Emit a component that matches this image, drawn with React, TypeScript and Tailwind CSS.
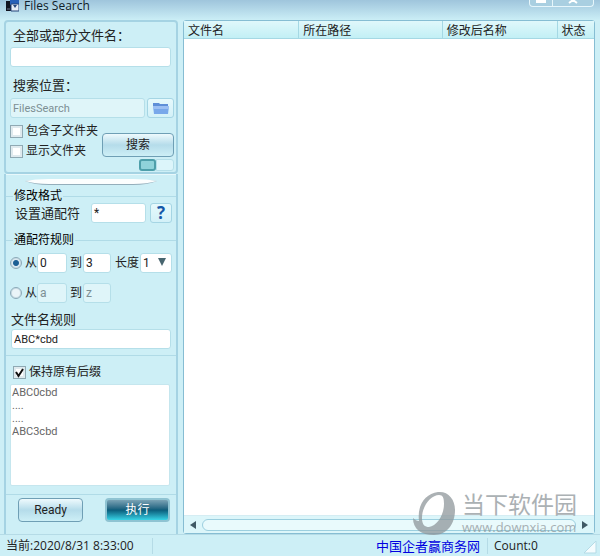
import React from "react";

const fieldBase =
  "h-5 min-w-0 rounded-[3px] border border-[#b5dfe9] bg-white px-[2px] font-['Roboto',sans-serif] leading-4 text-[#222] outline-none disabled:bg-[#dff5f9] disabled:text-[#7d8f94] disabled:opacity-100";
const field = fieldBase + " text-[12px]";
const smallField = fieldBase + " text-[11px]";
const iconButton =
  "flex h-5 items-center justify-center rounded-[3px] border border-[#a5d5e4] bg-gradient-to-b from-[#e6f9fc] to-[#d3f1f8]";
const pushButton =
  "h-6 rounded-[4px] border border-[#6f9fb5] bg-gradient-to-b from-[#eefafd] via-[#b5dcea] to-[#cdeff6] text-[12px] text-[#222]";
const wide = "text-[13px] leading-5 text-[#222]";
const tick =
  "size-[13px] shrink-0 appearance-none border border-[#8fa9b3] bg-white shadow-[inset_0_0_0_2px_#dfeaee]";
const dot =
  "size-3 shrink-0 appearance-none rounded-full border border-[#8aa9b8] bg-[#eaf4f8] shadow-[inset_0_0_0_1px_#c8dbe3] checked:bg-[radial-gradient(circle,#1c5f94_35%,#dceaf2_50%)]";

function TitleBar() {
  return (
    <header className="flex h-5 items-start justify-between bg-gradient-to-b from-[#9fc5dc] to-[#cbeef6] pl-[6px] pr-[6px]">
      <div className="flex items-start gap-[5px]">
        <svg width="13" height="12" viewBox="0 0 13 12" aria-hidden="true">
          <path d="M0 1h5v10H0z" fill="#10131f" />
          <path d="M4 0h9v5H4z" fill="#2760b8" />
          <path d="M5 4h8v7H5z" fill="#e8eef6" stroke="#26467c" />
          <path d="M7 5h4L9 8z" fill="#26467c" />
          <path d="M1 9h3" stroke="#6c7890" />
        </svg>
        <h1 className="text-[12px] leading-3 text-[#10202a]">Files Search</h1>
      </div>
      <div className="flex h-[7px] overflow-hidden rounded-b-[4px] border border-t-0 border-[#e6f6fb] bg-[#a9cfe1]">
        <button aria-label="Maximize" className="flex w-[23px] justify-center border-r border-[#e6f6fb]">
          <span className="h-[3px] w-[10px] bg-white" />
        </button>
        <button aria-label="Close" className="flex w-10 justify-center">
          <svg width="10" height="4" viewBox="0 0 10 4">
            <path d="M5 0 1 3M5 0l4 3" stroke="#fff" strokeWidth="2" />
          </svg>
        </button>
      </div>
    </header>
  );
}

function SearchPanel() {
  return (
    <section className="flex flex-col rounded-[4px] border-2 border-[#a5d3e3] pb-[1px] pl-1 pr-[2px] pt-[3px]">
      <label htmlFor="name" className={wide + " pl-[3px]"}>全部或部分文件名：</label>
      <input id="name" className={field + " mr-[3px] mt-[2px]"} />
      <label htmlFor="place" className={wide + " mt-2 pl-[3px]"}>搜索位置：</label>
      <div className="mt-[3px] flex gap-[2px]">
        <input id="place" disabled defaultValue="FilesSearch" className={smallField + " flex-1"} />
        <button aria-label="Browse" className={iconButton + " w-[27px]"}>
          <svg width="16" height="13" viewBox="0 0 16 13">
            <path d="M0 1h6l1 1h8v3H0z" fill="#5f8fd8" />
            <path d="M0 4h16l-1 8H1z" fill="#78a8ea" />
            <path d="M0 4h16v3H0z" fill="#9cc0f3" />
          </svg>
        </button>
      </div>
      <div className="flex justify-between">
        <div className="mt-[3px] flex flex-col text-[12px] leading-5 text-[#222]">
          <label className="flex items-center gap-[3px] whitespace-nowrap"><input type="checkbox" className={tick} />包含子文件夹</label>
          <label className="flex items-center gap-[3px] whitespace-nowrap"><input type="checkbox" className={tick} />显示文件夹</label>
        </div>
        <div className="mt-[15px] flex flex-col items-end">
          <button className={pushButton + " w-[72px]"}>搜索</button>
          <div className="mt-[2px] flex h-3 w-[35px]">
            <button aria-label="On" className="w-[17px] rounded-[3px] border-2 border-[#4d9faa] bg-[#8fd3da]" />
            <button aria-label="Off" className="flex-1 rounded-r-[3px] border border-[#b5dfe9] bg-[#dcf5fa]" />
          </div>
        </div>
      </div>
    </section>
  );
}

function RulesPanel() {
  return (
    <section className="flex flex-1 flex-col border-x-2 border-[#a5d3e3]">
      <div className="flex h-[15px] items-center justify-center border-t border-[#e8f8fb]">
        <svg width="132" height="6" viewBox="0 0 132 6" aria-hidden="true">
          <path d="M0 2Q10 1 24 1h84q14 0 24 1-10 4-24 4H24Q10 6 0 2z" fill="#94aebb" />
          <path d="M0 2Q10 0 24 0h84q14 0 24 2-10 3-24 3H24Q10 5 0 2z" fill="#fcfefe" />
        </svg>
      </div>
      <fieldset className="min-w-0 border-t border-[#b0dbe7] pb-[10px] pl-[9px] pr-1">
        <legend className="-ml-[2px] px-[1px] text-[12px] leading-[14px] text-black">修改格式</legend>
        <div className="flex h-5 items-center gap-1">
          <label htmlFor="wild" className={wide + " flex-1"}>设置通配符</label>
          <input id="wild" defaultValue="*" className={field + " w-[55px]"} />
          <button aria-label="Help" className={iconButton + " w-[22px] text-[17px] font-bold text-[#1557a8]"}>?</button>
        </div>
      </fieldset>
      <fieldset className="min-w-0 border-y border-[#b0dbe7] pb-[6px] pl-1 pr-1">
        <legend className="ml-[3px] px-[1px] text-[12px] leading-[14px] text-black">通配符规则</legend>
        <div className="mt-[6px] flex h-5 items-center text-[12px] text-[#222]">
          <label className="flex shrink-0 items-center gap-[3px]"><input type="radio" name="range" defaultChecked className={dot} />从</label>
          <input aria-label="从" defaultValue="0" className={field + " w-[30px] shrink-0"} />
          <label htmlFor="to" className="shrink-0 pl-[3px] pr-[1px]">到</label>
          <input id="to" defaultValue="3" className={field + " w-7 shrink-0"} />
          <label htmlFor="len" className="flex-1 whitespace-nowrap pl-1">长度</label>
          <div className="relative flex">
            <select id="len" defaultValue="1" className={field + " w-8 appearance-none"}><option>1</option></select>
            <svg width="8" height="8" viewBox="0 0 8 8" className="pointer-events-none absolute right-[6px] top-[5px]"><path d="M0 0h8L4 8z" fill="#48656f" /></svg>
          </div>
        </div>
        <div className="mt-[10px] flex h-5 items-center text-[12px] text-[#222]">
          <label className="flex shrink-0 items-center gap-[3px]"><input type="radio" name="range" className={dot} />从</label>
          <input aria-label="从" disabled defaultValue="a" className={field + " w-[30px] shrink-0"} />
          <label htmlFor="toz" className="shrink-0 pl-[3px] pr-[1px]">到</label>
          <input id="toz" disabled defaultValue="z" className={field + " w-7 shrink-0"} />
        </div>
        <label htmlFor="rule" className={wide + " mt-[6px] block pl-[1px]"}>文件名规则</label>
        <div className="flex pl-[1px] pr-[1px]">
          <input id="rule" defaultValue="ABC*cbd" className={smallField + " w-full"} />
        </div>
      </fieldset>
      <div className="flex flex-1 flex-col border-b border-[#b0dbe7] px-1 pb-[8px] pt-[6px]">
        <label className="flex items-center gap-[3px] pl-[3px] text-[12px] leading-5 text-[#222]">
          <span className="grid">
            <input type="checkbox" defaultChecked className={tick + " col-start-1 row-start-1"} />
            <svg width="13" height="13" viewBox="0 0 13 13" className="pointer-events-none col-start-1 row-start-1"><path d="m3 6 2.500 4L10 3" fill="none" stroke="#111" strokeWidth="2" /></svg>
          </span>
          保持原有后缀
        </label>
        <div className="mr-[2px] mt-[2px] flex-1 rounded-[2px] border border-[#c5e6ee] bg-white px-[1px] pt-[1px] font-['Roboto',sans-serif] text-[11px] leading-[13px] text-[#666]">
          <p>ABC0cbd</p><p>....</p><p>....</p><p>ABC3cbd</p>
        </div>
      </div>
      <div className="flex justify-between pb-3 pl-3 pr-[6px] pt-[3px]">
        <button className={pushButton + " w-[65px] font-['Roboto',sans-serif]"}>Ready</button>
        <button className="h-6 w-[65px] rounded-[4px] border-2 border-[#8fc3d2] bg-gradient-to-b from-[#7aa3b5] via-[#0b5d7b] to-[#38d3e6] text-[12px] text-white">执行</button>
      </div>
    </section>
  );
}

function Results() {
  return (
    <main className="flex flex-1 flex-col rounded-[3px] border border-[#86bdd3] bg-white">
      <table className="w-full table-fixed text-left text-[12px] text-[#222]">
        <thead>
          <tr className="border-b border-[#a5d8e4] bg-gradient-to-b from-[#e0f8fb] to-[#c2eff5] leading-[14px]">
            <th className="w-[28%] border-r border-[#a5d8e4] px-1 pt-[3px] font-normal">文件名</th>
            <th className="w-[35%] border-r border-[#a5d8e4] px-1 pt-[3px] font-normal">所在路径</th>
            <th className="w-[28%] border-r border-[#a5d8e4] px-1 pt-[3px] font-normal">修改后名称</th>
            <th className="px-1 pt-[3px] font-normal">状态</th>
          </tr>
        </thead>
        <tbody />
      </table>
      <div className="flex-1" />
      <div className="flex h-[18px] items-center gap-[6px] border-t border-[#d5edf3] bg-[#dcf6fa] px-[6px]">
        <button aria-label="Left"><svg width="6" height="8" viewBox="0 0 6 8"><path d="M6 0v8L0 4z" fill="#3f5965" /></svg></button>
        <div className="h-3 flex-1 rounded-full border border-[#9ccfdf] bg-[#e9fafc]" />
        <button aria-label="Right"><svg width="6" height="8" viewBox="0 0 6 8"><path d="M0 0v8l6-4z" fill="#3f5965" /></svg></button>
      </div>
    </main>
  );
}

function Watermark() {
  return (
    <div className="pointer-events-none absolute bottom-[20px] right-[23px] flex items-center gap-[6px] text-[#8f979b] opacity-75">
      <svg width="43" height="45" viewBox="0 0 43 45" aria-hidden="true">
        <path
          fillRule="evenodd"
          fill="currentColor"
          d="M25 1C35 0 42 8 42 19C42 33 34 44 21 44C8 44 0 38 0 27C2 29 4 30 6 30C4 14 12 3 25 1ZM26 4C18 4 9 15 9 27C9 34 12 36 16 36C24 35 31 24 31 13C31 7 30 4 26 4Z"
        />
      </svg>
      <div className="flex flex-col">
        <span className="text-[23px] leading-[27px]">当下软件园</span>
        <span className="text-[13px] leading-[18px]">www.downxia.com</span>
      </div>
    </div>
  );
}

export default function App() {
  return (
    <div className="relative flex min-h-screen flex-col bg-[#cdeff6] font-['Open_Sans','Noto_Sans_CJK_SC',sans-serif]">
      <TitleBar />
      <div className="flex flex-1 gap-[5px] pl-1 pr-[5px]">
        <div className="flex w-[174px] flex-col">
          <SearchPanel />
          <RulesPanel />
        </div>
        <Results />
      </div>
      <footer className="flex h-[22px] items-center border-t border-[#b5dbe6] pl-[6px] text-[12px] leading-4 text-[#222]">
        <span className="w-[147px] border-r border-[#b5dbe6]">当前:2020/8/31 8:33:00</span>
        <a href="#" className="ml-auto text-[13px] text-[#0000e0]">中国企者赢商务网</a>
        <span className="ml-[7px] w-[91px] border-l border-[#b5dbe6] pl-[6px]">Count:0</span>
        <svg width="22" height="20" viewBox="0 0 22 20" aria-hidden="true">
          <path d="M18 5v12H6z" fill="#f4fcfe" stroke="#b5dbe6" />
        </svg>
      </footer>
      <Watermark />
    </div>
  );
}
